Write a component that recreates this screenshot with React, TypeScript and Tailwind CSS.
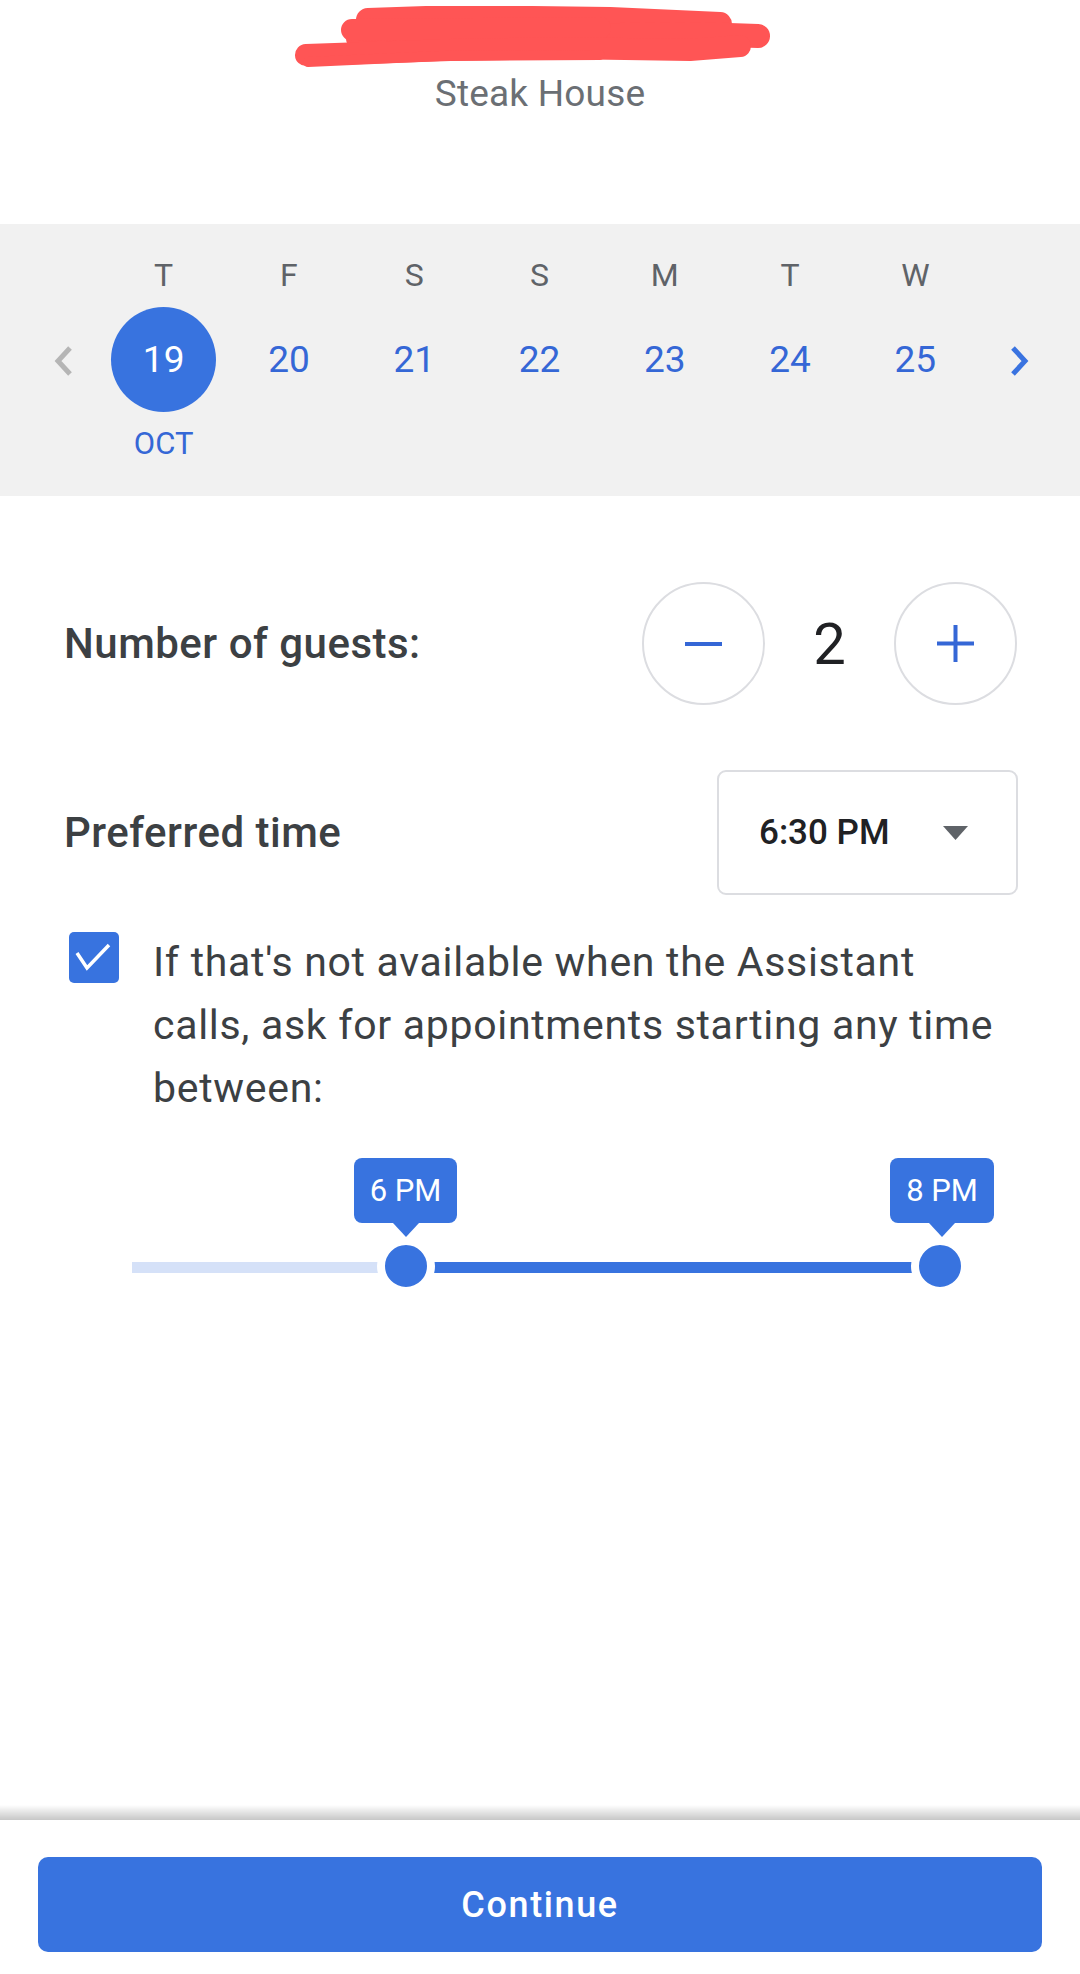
import React from "react";

const days: [string, string][] = [
  ["T", "19"],
  ["F", "20"],
  ["S", "21"],
  ["S", "22"],
  ["M", "23"],
  ["T", "24"],
  ["W", "25"],
];

function Scribble() {
  return (
    <svg width="1080" height="64" viewBox="0 6 1080 64" className="block mt-[6px]">
      <g stroke="#ff5555" strokeLinecap="round" strokeLinejoin="round" fill="none">
        <path d="M368 20 L455 17 L610 19 L720 24" strokeWidth="24" />
        <path d="M358 38 L540 36 L700 34 L758 36" strokeWidth="24" />
        <path d="M352 30 L600 28" strokeWidth="22" />
        <path d="M306 55 L450 50 L560 48 L690 50 L740 46" strokeWidth="22" />
        <path d="M308 62 L440 56 L600 55" strokeWidth="10" />
      </g>
    </svg>
  );
}

export default function App() {
  return (
    <div className="w-[1080px] h-[1974px] bg-white flex flex-col font-[Roboto,sans-serif] overflow-hidden">
      {/* Header */}
      <header className="h-[224px] flex flex-col items-center shrink-0">
        <Scribble />
        <div className="mt-[2px] text-[37px] leading-[44px] text-[#6b6f74] tracking-[0.2px]">Steak House</div>
      </header>

      {/* Date strip */}
      <section className="h-[272px] bg-[#f1f1f1] flex pt-[35px] shrink-0">
        <div className="w-[101px] pl-[52px] pt-[86px]">
          <svg width="22" height="32" viewBox="0 0 22 32">
            <path d="M18 3 L6 16 L18 29" stroke="#b5b5b5" strokeWidth="5" fill="none" />
          </svg>
        </div>
        <div className="w-[877px] grid grid-cols-7">
          {days.map(([d, n], i) => (
            <div key={i} className="flex flex-col items-center">
              <div className="h-[32px] text-[32px] leading-[32px] text-[#5f6368]">{d}</div>
              <div
                className={
                  i === 0
                    ? "mt-[16px] w-[105px] h-[105px] rounded-full bg-[#3873df] text-white flex items-center justify-center text-[37px] leading-[37px]"
                    : "mt-[16px] w-[105px] h-[105px] rounded-full text-[#3567d6] flex items-center justify-center text-[37px] leading-[37px]"
                }
              >
                {n}
              </div>
              {i === 0 && (
                <div className="mt-[16px] text-[31px] leading-[31px] text-[#3567d6]">OCT</div>
              )}
            </div>
          ))}
        </div>
        <div className="flex-1 pl-[31px] pt-[86px]">
          <svg width="22" height="32" viewBox="0 0 22 32">
            <path d="M4 3 L16 16 L4 29" stroke="#3a73e0" strokeWidth="5" fill="none" />
          </svg>
        </div>
      </section>

      {/* Main */}
      <main className="flex-1 flex flex-col pl-[64px] pr-[62px]">
        <div className="mt-[86px] h-[123px] flex items-center justify-between">
          <div className="text-[42px] leading-[42px] font-medium text-[#3c4043] tracking-[0.5px]">Number of guests:</div>
          <div className="flex items-center mr-[1px]">
            <div className="w-[123px] h-[123px] rounded-full border-2 border-[#dcdde1] flex items-center justify-center">
              <div className="w-[37px] h-[4px] bg-[#3567d6]" />
            </div>
            <div className="w-[129px] text-center text-[58px] leading-[58px] text-[#202124]">2</div>
            <div className="w-[123px] h-[123px] rounded-full border-2 border-[#dcdde1] flex items-center justify-center">
              <svg width="37" height="37" viewBox="0 0 37 37">
                <rect x="0" y="16.5" width="37" height="4" fill="#3567d6" />
                <rect x="16.5" y="0" width="4" height="37" fill="#3567d6" />
              </svg>
            </div>
          </div>
        </div>

        <div className="mt-[65px] h-[125px] flex items-center justify-between">
          <div className="text-[42px] leading-[42px] font-medium text-[#3c4043] tracking-[0.5px]">Preferred time</div>
          <div className="w-[301px] h-[125px] rounded-[9px] border-2 border-[#dcdde1] flex items-center justify-between pl-[40px] pr-[48px]">
            <span className="text-[35px] leading-[35px] font-medium text-[#202124]">6:30 PM</span>
            <svg width="25" height="14" viewBox="0 0 25 14">
              <path d="M0 0 L25 0 L12.5 14 Z" fill="#5f6368" />
            </svg>
          </div>
        </div>

        <div className="mt-[36px] flex items-start">
          <div className="ml-[5px] mt-[1px] w-[50px] h-[51px] rounded-[5px] bg-[#3873df] shrink-0">
            <svg width="50" height="51" viewBox="0 0 50 51">
              <path d="M8 21 L18 36 L40 13" stroke="white" strokeWidth="3.5" fill="none" strokeLinejoin="miter" />
            </svg>
          </div>
          <div className="ml-[34px] text-[41px] leading-[63px] text-[#3c4043] tracking-[0.7px] whitespace-nowrap">
            <div>If that's not available when the Assistant</div>
            <div>calls, ask for appointments starting any time</div>
            <div>between:</div>
          </div>
        </div>

        {/* Slider */}
        <div className="mt-[38px] relative h-[140px]">
          <div className="absolute left-[68px] top-[104px] w-[274px] h-[11px] bg-[#d5e1f8]" />
          <div className="absolute left-[342px] top-[104px] w-[534px] h-[11px] bg-[#3873df]" />
          <div className="absolute left-[313px] top-[79px] w-[58px] h-[58px] rounded-full bg-[#3873df] border-[8px] border-white" />
          <div className="absolute left-[847px] top-[79px] w-[58px] h-[58px] rounded-full bg-[#3873df] border-[8px] border-white" />

          <div className="absolute left-[290px] top-0 w-[103px] flex flex-col items-center">
            <div className="w-[103px] h-[65px] rounded-[8px] bg-[#3873df] flex items-center justify-center text-white text-[31px] leading-[31px]">
              6 PM
            </div>
            <svg width="26" height="14" viewBox="0 0 26 14" className="block">
              <path d="M0 0 L26 0 L13 14 Z" fill="#3873df" />
            </svg>
          </div>
          <div className="absolute left-[826px] top-0 w-[104px] flex flex-col items-center">
            <div className="w-[104px] h-[65px] rounded-[8px] bg-[#3873df] flex items-center justify-center text-white text-[31px] leading-[31px]">
              8 PM
            </div>
            <svg width="26" height="14" viewBox="0 0 26 14" className="block">
              <path d="M0 0 L26 0 L13 14 Z" fill="#3873df" />
            </svg>
          </div>
        </div>
      </main>

      <div className="h-[15px] shrink-0 bg-gradient-to-b from-[rgba(0,0,0,0)] to-[rgba(0,0,0,0.22)]" />
      <footer className="h-[154px] shrink-0 bg-white px-[38px] pt-[37px]">
        <button className="w-full h-[95px] rounded-[10px] bg-[#3873df] text-white text-[36px] font-medium tracking-[1.6px] flex items-center justify-center">
          Continue
        </button>
      </footer>
    </div>
  );
}
